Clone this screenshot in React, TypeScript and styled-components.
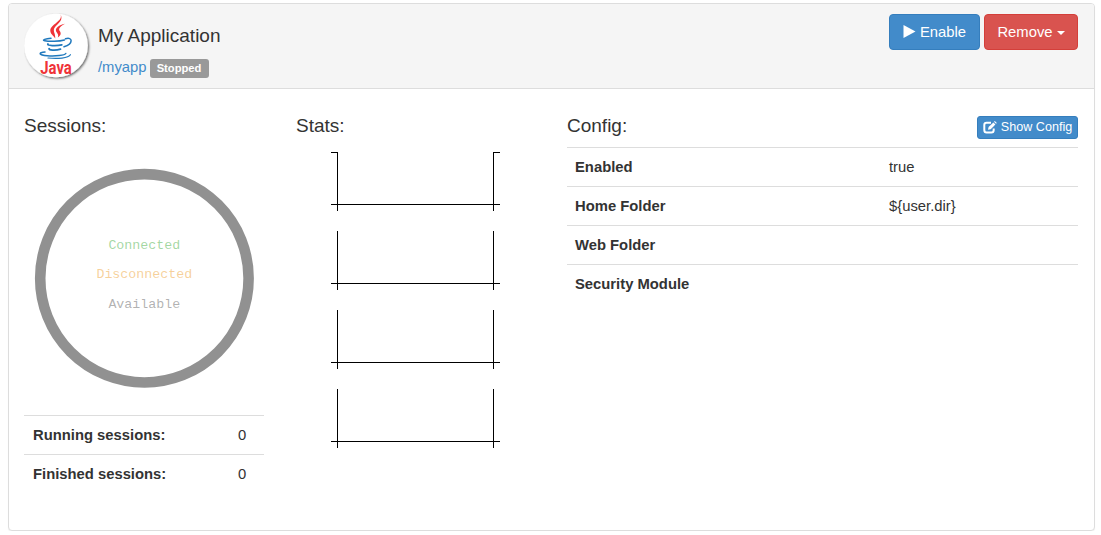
import React from "react";
import styled, { createGlobalStyle } from "styled-components";

const GlobalStyle = createGlobalStyle`
  * { box-sizing: border-box; }
  body {
    margin: 0;
    background: #fff;
    color: #333;
    font-family: "Liberation Sans", Arial, sans-serif;
    font-size: 14.8px;
    line-height: 22px;
  }
`;

const Panel = styled.section`
  margin: 3px 6px 0 8px;
  height: 528px;
  border: 1px solid #ddd;
  border-radius: 4px;
  box-shadow: 0 1px 1px rgba(0, 0, 0, 0.05);
  background: #fff;
`;

const Header = styled.header`
  display: flex;
  align-items: flex-start;
  height: 85px;
  padding: 10px 16px 0 15px;
  background: #f5f5f5;
  border-bottom: 1px solid #ddd;
  border-radius: 3px 3px 0 0;
`;

const Logo = styled.svg`
  flex: none;
  width: 68px;
  height: 68px;
  margin-top: -1px;
`;

const AppInfo = styled.div`
  flex: 1;
  padding: 11px 0 0 6px;
`;

const AppName = styled.h4`
  margin: 0;
  font-size: 19px;
  font-weight: 400;
  line-height: 22px;
`;

const AppPath = styled.div`
  display: flex;
  align-items: center;
  gap: 4px;
  margin-top: 9px;
`;

const PathLink = styled.a`
  color: #428bca;
  text-decoration: none;
`;

const Badge = styled.span`
  width: 59px;
  height: 19px;
  margin: 2px 0 0 -1px;
  border-radius: 3px;
  background: #999;
  color: #fff;
  font-size: 11.2px;
  font-weight: 700;
  line-height: 19px;
  text-align: center;
`;

const Actions = styled.div`
  display: flex;
  gap: 4px;
`;

const Button = styled.button<{ $tone?: "danger"; $small?: boolean; $width: number }>`
  display: flex;
  align-items: center;
  justify-content: center;
  gap: 4px;
  width: ${(p) => p.$width}px;
  height: ${(p) => (p.$small ? 23 : 36)}px;
  padding: 0;
  border: 1px solid ${(p) => (p.$tone ? "#d43f3a" : "#357ebd")};
  border-radius: ${(p) => (p.$small ? 3 : 4)}px;
  background: ${(p) => (p.$tone ? "#d9534f" : "#428bca")};
  color: #fff;
  font-family: inherit;
  font-size: ${(p) => (p.$small ? 12.6 : 14.8)}px;
  white-space: nowrap;
`;

const Caret = styled.span`
  border-top: 4px solid #fff;
  border-left: 4px solid transparent;
  border-right: 4px solid transparent;
  margin-top: 2px;
`;

const Body = styled.div`
  display: grid;
  grid-template-columns: 240px 239px 511px;
  column-gap: 32px;
  padding: 26px 16px 0 15px;
`;

const Column = styled.div``;

const TitleRow = styled.div`
  display: flex;
  align-items: center;
  justify-content: space-between;
  height: 24px;
`;

const Title = styled.h4`
  margin: -2px 0 0;
  font-size: 19px;
  font-weight: 400;
  line-height: 22px;
`;

const Donut = styled.svg`
  display: block;
  width: 240px;
  height: 240px;
  margin-top: 19px;
`;

const Table = styled.div<{ $gap: number }>`
  margin-top: ${(p) => p.$gap}px;
`;

const Row = styled.div<{ $cols: string; $inset?: number }>`
  display: grid;
  grid-template-columns: ${(p) => p.$cols};
  height: 39px;
  padding: 8px 8px 0 ${(p) => p.$inset ?? 8}px;
  border-top: 1px solid #ddd;
`;

const Label = styled.span`
  font-weight: 700;
`;

const Value = styled.span``;

const Charts = styled.div`
  display: flex;
  flex-direction: column;
  gap: 20px;
  margin: 13px 0 0 35px;
`;

const Axes = styled.svg`
  display: block;
  width: 169px;
  height: 59px;
`;

function ChartAxes({ ticks }: { ticks?: boolean }) {
  return (
    <Axes viewBox="0 0 169 59" shapeRendering="crispEdges">
      <path d="M6.5 0V59M162.5 0V59M0 52.5H169" stroke="#000" fill="none" />
      {ticks && <path d="M0 .5H6.5M162.5 .5H169" stroke="#000" fill="none" />}
    </Axes>
  );
}

function JavaLogo() {
  return (
    <Logo viewBox="0 0 68 68">
      <defs>
        <filter id="disc-shadow" x="-10%" y="-10%" width="125%" height="125%">
          <feDropShadow dx="1.2" dy="1.2" stdDeviation="0.8" floodColor="#000" floodOpacity="0.6" />
        </filter>
      </defs>
      <circle cx="32" cy="32.5" r="31.8" fill="#fff" filter="url(#disc-shadow)" />
      <g fill="#ef3338">
        <path d="M36.5 1.5C39.5 8 26 11.5 26.3 17.8c.2 3.2 3.2 5 5 7.700C31.3 20.500 29.500 19 29.900 16.800 30.500 12 40.500 8.500 36.500 1.500Z" />
        <path d="M41 10.700c-6 1.300-9.800 4.300-9 7.300.5 1.900 3.300 3.100 1.800 6.500 4-2.600 3-5 1.900-6.500-1.500-2.100 0-4.500 5.300-7.300Z" />
      </g>
      <g fill="none" stroke="#2079bd" strokeWidth="1.500" strokeLinecap="round">
        <path d="M27 25.200c-5 .4-10 1.800-6.200 2.600 4.500.9 14.200.7 19.700-.8" />
        <path d="M41.500 25.800c7.200-2.500 8.300 5.200-1.500 7.900" />
        <path d="M24 31c-1.700 1.600 8 2.200 13.800.8" strokeWidth="1.800" />
        <path d="M25.200 35.600c-1.200 1.600 6.300 2.100 11.300.6" strokeWidth="1.800" />
        <path d="M21 39c-7 .7-6.500 3.100 2.300 3.700 8.500.6 17.500-.4 18.500-2.200" />
        <path d="M24 45c9.500 1 20.400.2 22.400-3.300" strokeWidth="1.200" />
      </g>
      <text
        x="16.300"
        y="61"
        fill="#ef3338"
        fontFamily="Roboto, sans-serif"
        fontSize="18.500"
        fontWeight="700"
        textLength="31.500"
        lengthAdjust="spacingAndGlyphs"
      >
        Java
      </text>
    </Logo>
  );
}

const legend = [
  { label: "Connected", color: "#5cb85c", y: 91 },
  { label: "Disconnected", color: "#f0ad4e", y: 120 },
  { label: "Available", color: "#777", y: 150 },
];

const config = [
  ["Enabled", "true"],
  ["Home Folder", "${user.dir}"],
  ["Web Folder", ""],
  ["Security Module", ""],
];

export default function App() {
  return (
    <>
      <GlobalStyle />
      <Panel>
        <Header>
          <JavaLogo />
          <AppInfo>
            <AppName>My Application</AppName>
            <AppPath>
              <PathLink>/myapp</PathLink>
              <Badge>Stopped</Badge>
            </AppPath>
          </AppInfo>
          <Actions>
            <Button $width={91}>
              <svg width="13" height="14" viewBox="0 0 13 14">
                <path d="M.5 0 12.5 6.500 .5 13Z" fill="#fff" />
              </svg>
              Enable
            </Button>
            <Button $tone="danger" $width={94}>
              Remove
              <Caret />
            </Button>
          </Actions>
        </Header>
        <Body>
          <Column>
            <TitleRow>
              <Title>Sessions:</Title>
            </TitleRow>
            <Donut viewBox="0 0 240 240">
              <circle cx="120.4" cy="120.3" r="104.2" fill="none" stroke="#919191" strokeWidth="10.6" />
              {legend.map((l) => (
                <text
                  key={l.label}
                  x="120.3"
                  y={l.y}
                  textAnchor="middle"
                  fill={l.color}
                  fillOpacity="0.57"
                  fontFamily="Liberation Mono, monospace"
                  fontSize="13.3"
                >
                  {l.label}
                </text>
              ))}
            </Donut>
            <Table $gap={17}>
              <Row $cols="205px 1fr" $inset={9}>
                <Label>Running sessions:</Label>
                <Value>0</Value>
              </Row>
              <Row $cols="205px 1fr" $inset={9}>
                <Label>Finished sessions:</Label>
                <Value>0</Value>
              </Row>
            </Table>
          </Column>
          <Column>
            <TitleRow>
              <Title>Stats:</Title>
            </TitleRow>
            <Charts>
              <ChartAxes ticks />
              <ChartAxes />
              <ChartAxes />
              <ChartAxes />
            </Charts>
          </Column>
          <Column>
            <TitleRow>
              <Title>Config:</Title>
              <Button $small $width={101}>
                <svg width="14" height="13" viewBox="0 0 14 13">
                  <path d="M8 1.8H3.6Q1.3 1.8 1.3 4v5q0 2.5 2.3 2.5h4.8q2.3 0 2.3-2.5V7.6" fill="none" stroke="#fff" strokeWidth="2" />
                  <path d="m5 8.8.6-2.7L10.4 1.4l2 2L7.7 8.2Z" fill="#fff" />
                  <path d="m11 .8.8-.8 2 2-.8.8Z" fill="#fff" />
                </svg>
                Show Config
              </Button>
            </TitleRow>
            <Table $gap={8}>
              {config.map(([name, value]) => (
                <Row key={name} $cols="314px 1fr">
                  <Label>{name}</Label>
                  <Value>{value}</Value>
                </Row>
              ))}
            </Table>
          </Column>
        </Body>
      </Panel>
    </>
  );
}
